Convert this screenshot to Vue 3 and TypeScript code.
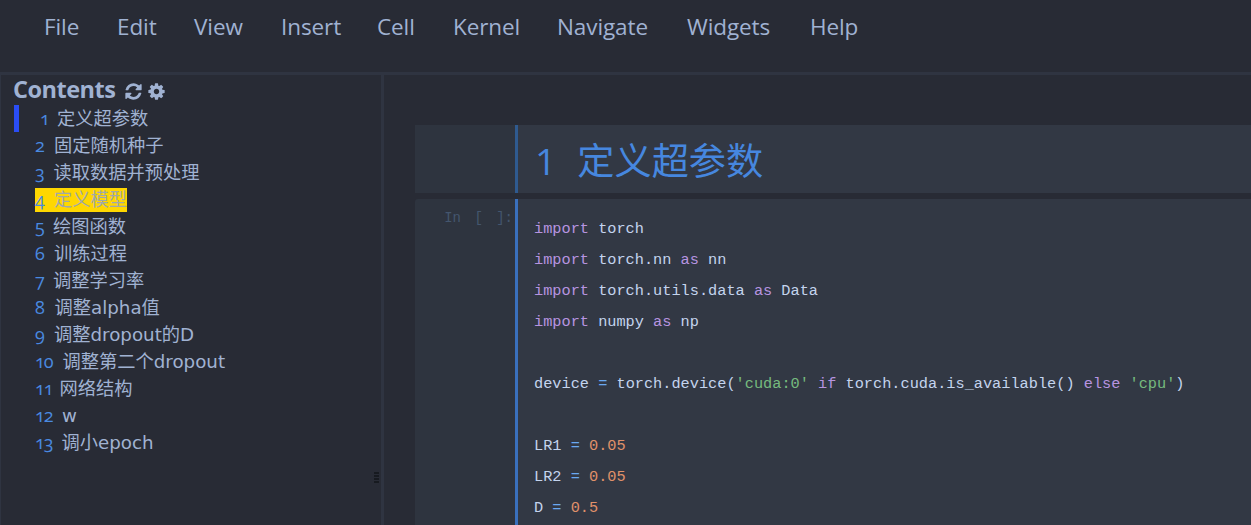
<script setup lang="ts">
const menus = [
  { label: 'File', width: 73 },
  { label: 'Edit', width: 77 },
  { label: 'View', width: 87 },
  { label: 'Insert', width: 96 },
  { label: 'Cell', width: 76 },
  { label: 'Kernel', width: 104 },
  { label: 'Navigate', width: 130 },
  { label: 'Widgets', width: 123 },
  { label: 'Help', width: 60 },
]

interface TocItem { n: string; text: string; numWidth: number; active?: boolean; marked?: boolean }
const toc: TocItem[] = [
  { n: '1', text: '定义超参数', numWidth: 17, active: true },
  { n: '2', text: '固定随机种子', numWidth: 19 },
  { n: '3', text: '读取数据并预处理', numWidth: 18.5 },
  { n: '4', text: '定义模型', numWidth: 19, marked: true },
  { n: '5', text: '绘图函数', numWidth: 18 },
  { n: '6', text: '训练过程', numWidth: 19 },
  { n: '7', text: '调整学习率', numWidth: 18 },
  { n: '8', text: '调整alpha值', numWidth: 19.5 },
  { n: '9', text: '调整dropout的D', numWidth: 19 },
  { n: '10', text: '调整第二个dropout', numWidth: 27.5 },
  { n: '11', text: '网络结构', numWidth: 24.5 },
  { n: '12', text: 'w', numWidth: 27 },
  { n: '13', text: '调小epoch', numWidth: 26.5 },
]

type Tok = [string, string]
const code: Tok[][] = [
  [['k', 'import'], ['', ' torch']],
  [['k', 'import'], ['', ' torch.nn '], ['k', 'as'], ['', ' nn']],
  [['k', 'import'], ['', ' torch.utils.data '], ['k', 'as'], ['', ' Data']],
  [['k', 'import'], ['', ' numpy '], ['k', 'as'], ['', ' np']],
  [],
  [['', 'device '], ['o', '='], ['', ' torch.device('], ['s', "'cuda:0'"], ['', ' '], ['k', 'if'], ['', ' torch.cuda.is_available() '], ['k', 'else'], ['', ' '], ['s', "'cpu'"], ['', ')']],
  [],
  [['', 'LR1 '], ['o', '='], ['', ' '], ['m', '0.05']],
  [['', 'LR2 '], ['o', '='], ['', ' '], ['m', '0.05']],
  [['', 'D '], ['o', '='], ['', ' '], ['m', '0.5']],
]
</script>

<template>
  <div class="page">
    <header class="menubar">
      <span v-for="m in menus" :key="m.label" class="menu" :style="{ width: m.width + 'px' }">{{ m.label }}</span>
    </header>
    <div class="body">
      <aside class="sidebar">
        <div class="toc-head">
          <span class="toc-title">Contents</span>
          <svg class="ico" viewBox="0 0 1792 1792"><path d="M1639 1056q0 5-1 7-64 268-268 434.5t-478 166.5q-146 0-282.5-55t-243.5-157l-129 129q-19 19-45 19t-45-19-19-45v-448q0-26 19-45t45-19h448q26 0 45 19t19 45-19 45l-137 137q71 66 161 102t187 36q134 0 250-65t186-179q11-17 53-117 8-23 30-23h192q13 0 22.5 9.5t9.5 22.5zm25-800v448q0 26-19 45t-45 19h-448q-26 0-45-19t-19-45 19-45l138-138q-148-137-349-137-134 0-250 65t-186 179q-11 17-53 117-8 23-30 23h-199q-13 0-22.5-9.5t-9.5-22.5v-7q65-268 270-434.5t480-166.5q146 0 284 55.5t245 156.5l130-129q19-19 45-19t45 19 19 45z"/></svg>
          <svg class="ico" viewBox="0 0 1792 1792"><path d="M1152 896q0-106-75-181t-181-75-181 75-75 181 75 181 181 75 181-75 75-181zm512-109v222q0 12-8 23t-20 13l-185 28q-19 54-39 91 35 50 107 138 10 12 10 25t-9 23q-27 37-99 108t-94 71q-12 0-26-9l-138-108q-44 23-91 38-16 136-29 186-7 28-36 28h-222q-14 0-24.5-8.5t-11.5-21.5l-28-184q-49-16-90-37l-141 107q-10 9-25 9-14 0-25-11-126-114-165-168-7-10-7-23 0-12 8-23 15-21 51-66.5t54-70.5q-27-50-41-99l-183-27q-13-2-21-12.5t-8-23.5v-222q0-12 8-23t19-13l186-28q14-46 39-92-40-57-107-138-10-12-10-24 0-10 9-23 26-36 98.5-107.5t94.5-71.5q13 0 26 10l138 107q44-23 91-38 16-136 29-186 7-28 36-28h222q14 0 24.5 8.5t11.5 21.5l28 184q49 16 90 37l142-107q9-9 24-9 13 0 25 10 129 119 165 170 7 8 7 22 0 12-8 23-15 21-51 66.5t-54 70.5q26 50 41 98l183 28q13 2 21 12.5t8 23.5z"/></svg>
        </div>
        <ul class="toc">
          <li v-for="it in toc" :key="it.n" class="toc-row" :class="{ active: it.active }">
            <span class="toc-link" :class="{ marked: it.marked }">
              <span class="num" :style="{ width: it.numWidth + 'px' }">{{ it.n }}</span>
              <span class="label">{{ it.text }}</span>
            </span>
          </li>
        </ul>
        <div class="grip"></div>
      </aside>
      <main class="notebook">
        <section class="cell text-cell">
          <div class="prompt"></div>
          <div class="content heading-wrap">
            <h1 class="heading"><span class="h-num">1</span>定义超参数</h1>
          </div>
        </section>
        <section class="cell code-cell">
          <div class="prompt in">In [ ]:</div>
          <div class="content code">
            <div v-for="(line, i) in code" :key="i" class="line"><span v-for="(t, j) in line" :key="j" :class="t[0]">{{ t[1] }}</span></div>
          </div>
        </section>
      </main>
    </div>
  </div>
</template>

<style>
html, body { margin: 0; background: #282b35; overflow: hidden; }
</style>

<style scoped>
.page { width: 1251px; height: 525px; display: flex; flex-direction: column; background: #282b35; overflow: hidden; }
.menubar { height: 72px; flex: none; display: flex; padding: 10px 0 0 44px; box-sizing: border-box; font: 22.5px/34px "Open Sans", sans-serif; color: #a0b2d2; letter-spacing: -0.1px; }
.menu { flex: none; }
.body { flex: 1; display: flex; min-height: 0; border-top: 3px solid #2f3441; }
.sidebar { position: relative; width: 384px; flex: none; box-sizing: border-box; padding-left: 14px; border-left: 1px solid #2f3441; border-right: 3px solid #2f3441; }
.toc-head { display: flex; align-items: center; height: 30px; color: #a0b2d2; }
.toc-title { font: 700 23.5px/28px "Open Sans", sans-serif; letter-spacing: -0.5px; margin: 0 9px 2px -2px; }
.ico { width: 19px; height: 19px; fill: #a0b2d2; margin: 2px 4px 0 0; }
.toc { list-style: none; margin: 0; padding: 0; }
.toc-row { height: 27px; box-sizing: border-box; padding-left: 21px; display: flex; align-items: center; margin-left: -1px; position: relative; }
.toc-row.active::before { content: ""; position: absolute; left: 0; top: 0; width: 5px; height: 27px; background: #2a4df5; }
.toc-row.active .num { padding-left: 5px; box-sizing: content-box; }
.toc-link { display: inline-flex; align-items: center; height: 24px; }
.toc-link.marked { background: #ffd700; }
.num { font: 18px/22px "Open Sans", serif; letter-spacing: -1px; font-feature-settings: "onum"; color: #4a8ae0; flex: none; height: 24px; }
.label { font: 18.25px/24px "DejaVu Sans", "Noto Sans CJK SC", sans-serif; color: #a0b2d2; }
.marked .label { color: #a0a8a8; }
.grip { position: absolute; right: 2px; top: 397px; width: 5px; height: 12px; background: repeating-linear-gradient(to bottom, #171a20 0 2px, transparent 2px 3px); }
.notebook { flex: 1; min-width: 0; padding: 50px 0 0 31px; display: flex; flex-direction: column; gap: 6px; }
.cell { display: flex; background: #2e343f; }
.text-cell { height: 68px; flex: none; }
.code-cell { flex: 1; border-radius: 3px 0 0 0; }
.prompt { width: 100px; flex: none; box-sizing: border-box; }
.prompt.in { font: 14px/20px "Liberation Mono", monospace; color: #44566e; text-align: right; padding: 9px 2px 0 0; white-space: pre; word-spacing: 5px; }
.content { flex: 1; min-width: 0; background: #323844; box-sizing: border-box; }
.heading-wrap { border-left: 3px solid #2f5a8f; padding: 2px 0 0 17px; display: flex; align-items: center; }
.heading { margin: 0; font: 400 37.2px/66px "Noto Sans CJK SC", sans-serif; color: #4687df; }
.h-num { font-family: "Open Sans", sans-serif; margin-right: 21px; }
.code { border-left: 3px solid #3a70bd; padding: 15px 0 0 16px; font: 15.27px/31px "Liberation Mono", monospace; color: #c4d4ee; white-space: pre; }
.line { height: 31px; }
.k { color: #b794e0; }
.o { color: #6aa8f0; }
.s { color: #76ba7e; }
.m { color: #e0916a; }
</style>
